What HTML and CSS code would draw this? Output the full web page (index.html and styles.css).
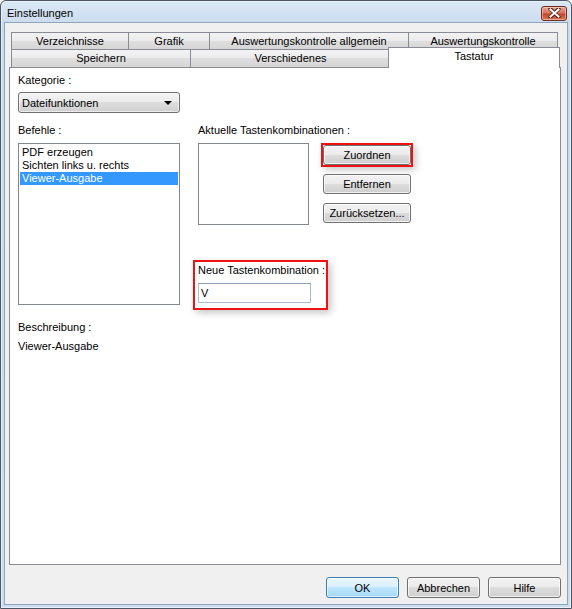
FILE: index.html
```html
<!DOCTYPE html>
<html>
<head>
<meta charset="utf-8">
<link rel="stylesheet" href="styles.css">
</head>
<body>
<div class="window">
  <div class="titlebar">
    <span class="title">Einstellungen</span>
    <span class="close"><svg width="15" height="10" viewBox="0 0 15 10"><path d="M3.5 1 L11.5 9 M11.5 1 L3.5 9" stroke="#3d1a12" stroke-width="3.6" stroke-linecap="square"/><path d="M3.5 1.5 L11.5 8.5 M11.5 1.5 L3.5 8.5" stroke="#fff" stroke-width="2" stroke-linecap="square"/></svg></span>
  </div>
  <div class="client">
    <div class="tabs">
      <div class="tabrow">
        <div class="tab w1">Verzeichnisse</div>
        <div class="tab w2">Grafik</div>
        <div class="tab w3">Auswertungskontrolle allgemein</div>
        <div class="tab w4">Auswertungskontrolle</div>
      </div>
      <div class="tabrow">
        <div class="tab w5">Speichern</div>
        <div class="tab w6">Verschiedenes</div>
        <div class="tab w7 active">Tastatur</div>
      </div>
    </div>
    <div class="panel">
      <div class="label">Kategorie :</div>
      <div class="combo"><span>Dateifunktionen</span><span class="arrow"></span></div>
      <div class="cols">
        <div class="left">
          <div class="label">Befehle :</div>
          <div class="listbox big">
            <div class="item">PDF erzeugen</div>
            <div class="item">Sichten links u. rechts</div>
            <div class="item selected">Viewer-Ausgabe</div>
          </div>
        </div>
        <div class="right">
          <div class="label">Aktuelle Tastenkombinationen :</div>
          <div class="keys">
            <div class="listbox small"></div>
            <div class="btncol">
              <div class="mark markbtn"><div class="btn wide">Zuordnen</div></div>
              <div class="btn wide">Entfernen</div>
              <div class="btn wide">Zurücksetzen...</div>
            </div>
          </div>
          <div class="mark newkey">
            <div class="label">Neue Tastenkombination :</div>
            <div class="input">V</div>
          </div>
        </div>
      </div>
      <div class="label desc">Beschreibung :</div>
      <div class="label desctext">Viewer-Ausgabe</div>
    </div>
    <div class="footer">
      <div class="btn dlg default">OK</div>
      <div class="btn dlg">Abbrechen</div>
      <div class="btn dlg">Hilfe</div>
    </div>
  </div>
</div>
</body>
</html>
```
FILE: styles.css
```css
* { box-sizing: border-box; }
html, body { margin: 0; padding: 0; background: #fff; }
body {
  font-family: "Liberation Sans", Arial, sans-serif;
  font-size: 11px;
  color: #000;
}
.window {
  width: 572px;
  height: 609px;
  border: 1px solid #4b5563;
  border-radius: 6px 6px 0 0;
  background: linear-gradient(#dbe7f4, #c6d9ee 30px, #c9dcf0);
  display: flex;
  flex-direction: column;
  box-shadow: inset 0 0 0 1px #e8f1fa;
}
.titlebar {
  height: 21px;
  flex: none;
  display: flex;
  align-items: center;
  justify-content: space-between;
  padding: 0 4px 0 6px;
}
.title { font-size: 11px; color: #000; padding-top: 2px; }
.close {
  width: 26px;
  height: 15px;
  margin-top: 3px;
  border: 1px solid #6c2f22;
  border-radius: 3px;
  background: linear-gradient(#e6a796, #d47660 45%, #c4452c 55%, #d8784f);
  display: flex;
  align-items: center;
  justify-content: center;
  box-shadow: inset 0 0 0 1px rgba(255,220,210,.5);
}
.client {
  flex: 1;
  margin: 0 3px 3px 3px;
  border: 1px solid #8fa4bd;
  background: #f0f0f0;
  display: flex;
  flex-direction: column;
  padding: 9px 6px 6px 4px;
}
.tabs { padding-left: 2px; }
.tabrow { display: flex; }
.tab {
  height: 18px;
  border: 1px solid #898c95;
  border-bottom: none;
  border-right: none;
  background: linear-gradient(#f3f3f3, #ebebeb 50%, #dedede 50%, #d6d6d6);
  text-align: center;
  line-height: 17px;
  white-space: nowrap;
}
.tabrow .tab:last-child { border-right: 1px solid #898c95; }
.tabrow:first-child .tab { height: 17px; line-height: 17px; }
.w1 { width: 117px; }
.w2 { width: 81px; }
.w3 { width: 199px; }
.w4 { width: 150px; }
.w5 { width: 179px; }
.w6 { width: 200px; }
.w7 { width: 168px; }
.tab.active {
  background: #fff;
  width: 172px;
  height: 21px;
  margin: -2px -2px -1px -2px;
  line-height: 16px;
  position: relative;
  z-index: 1;
  border-left: 1px solid #898c95;
}
.panel {
  flex: 1;
  background: #fff;
  border: 1px solid #898c95;
  padding: 6px 8px 0 8px;
}
.label { line-height: 13px; white-space: nowrap; }
.combo {
  margin-top: 5px;
  width: 162px;
  height: 21px;
  border: 1px solid #707070;
  border-radius: 3px;
  background: linear-gradient(#f2f2f2, #ebebeb 50%, #dddddd 50%, #cfcfcf);
  display: flex;
  align-items: center;
  justify-content: space-between;
  padding: 0 7px 0 3px;
  box-shadow: inset 0 0 0 1px rgba(255,255,255,.6);
}
.arrow {
  width: 0; height: 0;
  border-left: 4px solid transparent;
  border-right: 4px solid transparent;
  border-top: 4px solid #000;
  margin-top: 1px;
}
.cols { display: flex; margin-top: 11px; }
.left { width: 162px; margin-right: 18px; }
.listbox {
  border: 1px solid #828790;
  background: #fff;
  margin-top: 6px;
}
.listbox.big { height: 162px; padding: 2px 1px; }
.listbox.small { height: 82px; width: 111px; margin-top: 0; }
.item { line-height: 13px; padding-left: 2px; white-space: nowrap; }
.item.selected { background: #3399ff; color: #fff; }
.keys { display: flex; margin-top: 6px; }
.btncol {
  display: flex;
  flex-direction: column;
  gap: 9px;
  margin-left: 14px;
  padding-top: 2px;
}
.btn {
  height: 20px;
  border: 1px solid #707070;
  border-radius: 3px;
  background: linear-gradient(#f2f2f2, #ebebeb 50%, #dddddd 50%, #cfcfcf);
  box-shadow: inset 0 0 0 1px rgba(255,255,255,.7);
  display: flex;
  align-items: center;
  justify-content: center;
  white-space: nowrap;
}
.btn.wide { width: 88px; }
.mark {
  border: 2px solid #ee1111;
  box-shadow: 3px 3px 7px rgba(0,0,0,.22);
}
.markbtn { margin: -2px -2px -2px -2px; }
.newkey {
  width: 135px;
  margin: 35px 0 0 -5px;
  padding: 2px 0 5px 3px;
}
.input {
  margin-top: 6px;
  width: 113px;
  height: 20px;
  border: 1px solid #a9bbd0;
  border-top-color: #8ea1b8;
  background: #fff;
  padding: 3px 0 0 2px;
  line-height: 13px;
}
.desc { margin-top: 11px; }
.desctext { margin-top: 6px; }
.footer {
  display: flex;
  justify-content: flex-end;
  gap: 8px;
  margin-top: 12px;
}
.btn.dlg { width: 73px; height: 21px; }
.btn.default {
  border-color: #3c7fb1;
  background: linear-gradient(#eaf6fd, #d9f0fc 50%, #bee6fd 50%, #a7d9f5);
  box-shadow: inset 0 0 0 1px rgba(255,255,255,.6);
}
```
